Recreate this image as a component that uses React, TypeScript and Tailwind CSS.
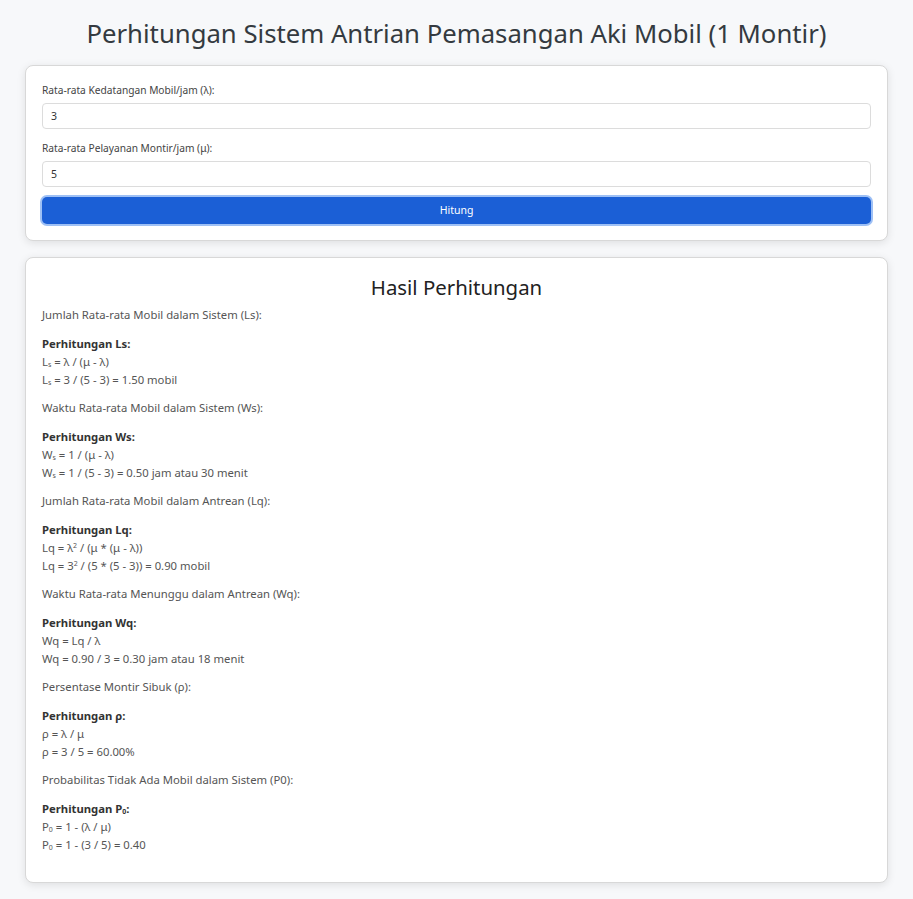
import React from 'react'

function Calc({
  title,
  head,
  lines,
}: {
  title: string
  head: React.ReactNode
  lines: React.ReactNode[]
}) {
  return (
    <>
      <p className="mb-[10.5px]">{title}</p>
      <p className="mb-[10.5px]">
        <strong className="font-bold text-[#333]">{head}</strong>
        {lines.map((l, i) => (
          <React.Fragment key={i}>
            <br />
            {l}
          </React.Fragment>
        ))}
      </p>
    </>
  )
}

const s = (t: string) => <sub className="text-[7px]">{t}</sub>
const sup = <sup className="text-[7px]">2</sup>

export default function App() {
  return (
    <div className="min-h-[899px] bg-[#f7f8fa] px-[25px] pb-4 pt-[14px] font-['Noto_Sans',sans-serif] text-[#555]">
      <h1 className="mb-[11px] text-center text-[25.7px] leading-[40px] text-[#343a40]">
        Perhitungan Sistem Antrian Pemasangan Aki Mobil (1 Montir)
      </h1>

      <div className="rounded-lg border border-[#d8d8d8] bg-white p-4 shadow-[0_2px_8px_rgba(0,0,0,0.1)]">
        <label className="mb-[5px] block text-[10.2px] leading-[16px] text-[#444]">
          Rata-rata Kedatangan Mobil/jam (λ):
        </label>
        <input
          defaultValue="3"
          className="mb-[11px] block h-[26px] w-full rounded border border-[#dcdcdc] px-2 text-[10.5px] text-[#333] outline-none"
        />
        <label className="mb-[5px] block text-[10.2px] leading-[16px] text-[#444]">
          Rata-rata Pelayanan Montir/jam (μ):
        </label>
        <input
          defaultValue="5"
          className="mb-[10px] block h-[26px] w-full rounded border border-[#dcdcdc] px-2 text-[10.5px] text-[#333] outline-none"
        />
        <button className="block h-[27px] w-full rounded-[5px] bg-[#1b5fd6] text-[10.5px] text-white ring-2 ring-[#9ec0f5]">
          Hitung
        </button>
      </div>

      <div className="mt-[16px] rounded-lg border border-[#d8d8d8] bg-white px-4 pb-[18px] pt-[14px] text-[11.3px] leading-[18px] shadow-[0_2px_8px_rgba(0,0,0,0.1)]">
        <h2 className="mb-[4px] text-center text-[20.4px] leading-[30px] text-[#222]">
          Hasil Perhitungan
        </h2>
        <Calc
          title="Jumlah Rata-rata Mobil dalam Sistem (Ls):"
          head="Perhitungan Ls:"
          lines={[
            <>L{s('s')} = λ / (μ - λ)</>,
            <>L{s('s')} = 3 / (5 - 3) = 1.50 mobil</>,
          ]}
        />
        <Calc
          title="Waktu Rata-rata Mobil dalam Sistem (Ws):"
          head="Perhitungan Ws:"
          lines={[
            <>W{s('s')} = 1 / (μ - λ)</>,
            <>W{s('s')} = 1 / (5 - 3) = 0.50 jam atau 30 menit</>,
          ]}
        />
        <Calc
          title="Jumlah Rata-rata Mobil dalam Antrean (Lq):"
          head="Perhitungan Lq:"
          lines={[
            <>Lq = λ{sup} / (μ * (μ - λ))</>,
            <>Lq = 3{sup} / (5 * (5 - 3)) = 0.90 mobil</>,
          ]}
        />
        <Calc
          title="Waktu Rata-rata Menunggu dalam Antrean (Wq):"
          head="Perhitungan Wq:"
          lines={[<>Wq = Lq / λ</>, <>Wq = 0.90 / 3 = 0.30 jam atau 18 menit</>]}
        />
        <Calc
          title="Persentase Montir Sibuk (ρ):"
          head="Perhitungan ρ:"
          lines={[<>ρ = λ / μ</>, <>ρ = 3 / 5 = 60.00%</>]}
        />
        <Calc
          title="Probabilitas Tidak Ada Mobil dalam Sistem (P0):"
          head={<>Perhitungan P{s('0')}:</>}
          lines={[
            <>P{s('0')} = 1 - (λ / μ)</>,
            <>P{s('0')} = 1 - (3 / 5) = 0.40</>,
          ]}
        />
      </div>
    </div>
  )
}
